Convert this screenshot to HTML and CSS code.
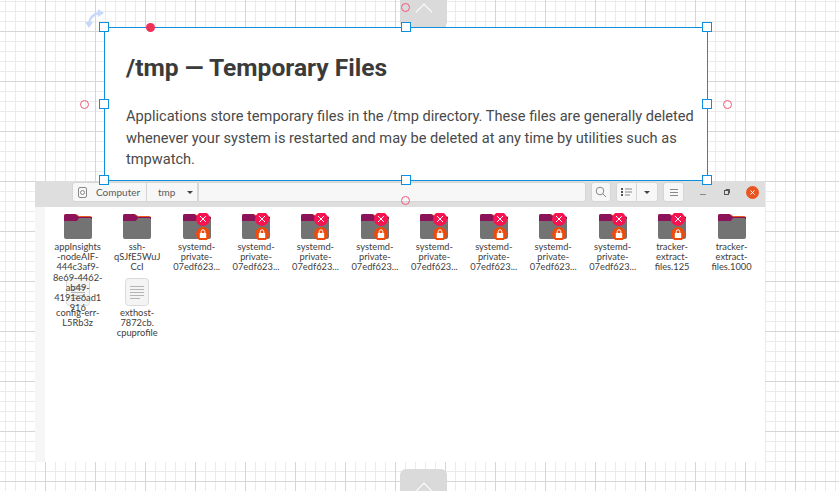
FILE: index.html
```html
<!DOCTYPE html>
<html lang="en">

<head>
    <meta charset="UTF-8">
    <meta name="viewport" content="width=device-width, initial-scale=1.0">
    <link rel="stylesheet" href="styles.css">
    <title>/tmp slide</title>
</head>

<body>
    <svg class="defs" width="0" height="0">
        <symbol id="folder" viewBox="0 0 30 27">
            <path d="M1 3 Q1 1 3 1 H13 L16 3 H27 Q29 3 29 5 V8 H1 Z" fill="#e4571f" />
            <path d="M1 3 Q1 1 3 1 H12 L16 4 H29 V6 H16 L14 8 H1 Z" fill="#8c1259" />
            <path d="M1 8 H14 L16 5 H27 Q29 5 29 7 V24 Q29 26 27 26 H3 Q1 26 1 24 Z" fill="#737373" />
        </symbol>
        <symbol id="locked" viewBox="0 0 30 27">
            <use href="#folder" />
            <circle cx="21" cy="6" r="7" fill="#f6134f" />
            <path d="M18 3 L24 9 M24 3 L18 9" stroke="#fff" stroke-width="1" />
            <circle cx="21" cy="21" r="7" fill="#ee4a0b" />
            <rect x="17.8" y="20" width="6.4" height="5" rx="0.6" fill="#fff" />
            <path d="M19.2 20 V18.6 A1.8 1.8 0 0 1 22.8 18.6 V20" fill="none" stroke="#fff" stroke-width="1" />
        </symbol>
        <symbol id="doc" viewBox="0 0 24 28">
            <rect x="0.5" y="0.5" width="23" height="27" rx="3" fill="#f4f4f4" stroke="#dadada" />
            <path d="M5 8.5 H19 M5 11.5 H19 M5 14.5 H19 M5 17.5 H19 M5 20.5 H15" stroke="#b4b4b4" stroke-width="1" />
        </symbol>
    </svg>

    <div class="tab tab-top"><span class="chevron"></span></div>
    <div class="tab tab-bottom"><span class="chevron"></span></div>

    <section class="window">
        <header class="toolbar">
            <div class="pathbar">
                <div class="crumb crumb-root">
                    <svg class="disk" width="9" height="11" viewBox="0 0 9 11">
                        <rect x="0.5" y="0.5" width="8" height="10" rx="1.5" fill="none" stroke="#888" />
                        <circle cx="4.5" cy="5.5" r="2" fill="none" stroke="#888" />
                    </svg>
                    <span>Computer</span>
                </div>
                <div class="crumb crumb-tmp">
                    <span>tmp</span>
                    <span class="caret"></span>
                </div>
            </div>
            <div class="path-fill"></div>
            <button class="tool tool-search">
                <svg width="12" height="12" viewBox="0 0 12 12">
                    <circle cx="5" cy="5" r="3.8" fill="none" stroke="#888" />
                    <path d="M8 8 L11 11" stroke="#888" />
                </svg>
            </button>
            <div class="tool-group">
                <button class="tool tool-list">
                    <svg width="11" height="8" viewBox="0 0 11 8">
                        <path d="M0 0 H2 V2 H0 Z M0 3 H2 V5 H0 Z M0 6 H2 V8 H0 Z" fill="#555" />
                        <path d="M4 1 H11 M4 4 H11 M4 7 H9" stroke="#888" />
                    </svg>
                </button>
                <button class="tool tool-drop"><span class="caret"></span></button>
            </div>
            <button class="tool tool-menu">
                <svg width="8" height="7" viewBox="0 0 8 7">
                    <path d="M0 0.5 H8 M0 3.5 H8 M0 6.5 H8" stroke="#888" />
                </svg>
            </button>
            <div class="controls">
                <span class="minimize"></span>
                <svg class="restore" width="6" height="6" viewBox="0 0 6 6">
                    <rect x="0.5" y="1.5" width="4" height="4" fill="none" stroke="#555" />
                    <path d="M2 1 V0.5 H5.5 V4 H5" fill="none" stroke="#555" />
                </svg>
                <span class="close">
                    <svg width="5" height="5" viewBox="0 0 5 5">
                        <path d="M0.5 0.5 L4.5 4.5 M4.5 0.5 L0.5 4.5" stroke="#fff" stroke-width="1" />
                    </svg>
                </span>
            </div>
        </header>

        <div class="files">
            <div class="file">
                <svg class="icon"><use href="#folder" /></svg>
                <p>appInsights<br>-nodeAIF-<br>444c3af9-<br>8e69-4462-<br>ab49-<br>4191e6ad1<br>916</p>
            </div>
            <div class="file">
                <svg class="icon"><use href="#folder" /></svg>
                <p>ssh-<br>qSJfE5WuJ<br>CcI</p>
            </div>
            <div class="file">
                <svg class="icon"><use href="#locked" /></svg>
                <p>systemd-<br>private-<br>07edf623...</p>
            </div>
            <div class="file">
                <svg class="icon"><use href="#locked" /></svg>
                <p>systemd-<br>private-<br>07edf623...</p>
            </div>
            <div class="file">
                <svg class="icon"><use href="#locked" /></svg>
                <p>systemd-<br>private-<br>07edf623...</p>
            </div>
            <div class="file">
                <svg class="icon"><use href="#locked" /></svg>
                <p>systemd-<br>private-<br>07edf623...</p>
            </div>
            <div class="file">
                <svg class="icon"><use href="#locked" /></svg>
                <p>systemd-<br>private-<br>07edf623...</p>
            </div>
            <div class="file">
                <svg class="icon"><use href="#locked" /></svg>
                <p>systemd-<br>private-<br>07edf623...</p>
            </div>
            <div class="file">
                <svg class="icon"><use href="#locked" /></svg>
                <p>systemd-<br>private-<br>07edf623...</p>
            </div>
            <div class="file">
                <svg class="icon"><use href="#locked" /></svg>
                <p>systemd-<br>private-<br>07edf623...</p>
            </div>
            <div class="file">
                <svg class="icon"><use href="#locked" /></svg>
                <p>tracker-<br>extract-<br>files.125</p>
            </div>
            <div class="file">
                <svg class="icon"><use href="#folder" /></svg>
                <p>tracker-<br>extract-<br>files.1000</p>
            </div>
            <div class="file">
                <svg class="icon icon-doc"><use href="#doc" /></svg>
                <p>config-err-<br>L5Rb3z</p>
            </div>
            <div class="file">
                <svg class="icon icon-doc"><use href="#doc" /></svg>
                <p>exthost-<br>7872cb.<br>cpuprofile</p>
            </div>
        </div>
    </section>

    <section class="textbox">
        <h1>/tmp — Temporary Files</h1>
        <p>Applications store temporary files in the /tmp directory. These files are generally deleted whenever your system is restarted and may be deleted at any time by utilities such as tmpwatch.</p>

        <span class="handle h-tl"></span>
        <span class="handle h-tc"></span>
        <span class="handle h-tr"></span>
        <span class="handle h-ml"></span>
        <span class="handle h-mr"></span>
        <span class="handle h-bl"></span>
        <span class="handle h-bc"></span>
        <span class="handle h-br"></span>

        <span class="link-dot"></span>
        <span class="anchor a-top"></span>
        <span class="anchor a-left"></span>
        <span class="anchor a-right"></span>
        <span class="anchor a-bottom"></span>

        <svg class="rotate" width="20" height="20" viewBox="0 0 20 20">
            <path d="M4 16 Q5 7 14 5" fill="none" stroke="#c6d9fa" stroke-width="2.4" />
            <path d="M13 1 L19 5 L13 9 Z" fill="#c6d9fa" />
            <path d="M0 14 L8 14 L4 20 Z" fill="#c6d9fa" />
        </svg>
    </section>
</body>

</html>
```
FILE: styles.css
```css
html,
body {
    height: 100%;
}

body {
    position: relative;
    margin: 0;
    overflow: hidden;
    background-color: #fff;
    background-image:
        linear-gradient(#d6d6d6 1px, transparent 1px),
        linear-gradient(90deg, #d6d6d6 1px, transparent 1px),
        linear-gradient(#ebebeb 1px, transparent 1px),
        linear-gradient(90deg, #ebebeb 1px, transparent 1px);
    background-size: 50px 50px, 50px 50px, 10px 10px, 10px 10px;
    background-position: 0 31px, 45px 0, 0 1px, 5px 0;
    font-family: Lato, sans-serif;
}

.defs {
    position: absolute;
}

/* grey page tabs at top and bottom of the canvas */
.tab {
    position: absolute;
    left: 400px;
    width: 47px;
    background: #dadada;
    display: flex;
    justify-content: center;
}

.tab-top {
    top: 0;
    height: 28px;
    border-radius: 0 0 6px 6px;
    padding-top: 6px;
    box-sizing: border-box;
}

.tab-bottom {
    top: 469px;
    height: 40px;
    border-radius: 6px 6px 0 0;
    padding-top: 16px;
    box-sizing: border-box;
}

.chevron {
    width: 11px;
    height: 11px;
    border-top: 1px solid #fff;
    border-left: 1px solid #fff;
    transform: rotate(45deg);
}

/* file manager window */
.window {
    position: absolute;
    left: 35px;
    top: 181px;
    width: 730px;
    height: 281px;
    display: flex;
    flex-direction: column;
    background: #fff;
    border-left: 10px solid #f6f6f6;
    box-sizing: border-box;
}

.toolbar {
    height: 26px;
    margin-left: -10px;
    padding: 1px 0 0 37px;
    background: #dedede;
    display: flex;
    align-items: flex-start;
    box-sizing: border-box;
    flex-shrink: 0;
}

.pathbar {
    display: flex;
    height: 20px;
    background: #f7f7f7;
    border: 1px solid #d6d6d6;
    border-radius: 3px 0 0 3px;
    box-sizing: border-box;
    font-size: 10px;
    color: #5a5a5a;
}

.crumb {
    display: flex;
    align-items: center;
    border-right: 1px solid #d6d6d6;
}

.crumb-root {
    width: 74px;
    padding-left: 5px;
    gap: 9px;
    box-sizing: border-box;
}

.crumb-tmp {
    width: 51px;
    padding-left: 11px;
    gap: 12px;
    box-sizing: border-box;
}

.disk {
    flex-shrink: 0;
}

.caret {
    width: 0;
    height: 0;
    border-left: 3px solid transparent;
    border-right: 3px solid transparent;
    border-top: 3px solid #444;
}

.path-fill {
    width: 387px;
    height: 20px;
    background: #f7f7f7;
    border: 1px solid #d6d6d6;
    border-left: 0;
    border-radius: 0 3px 3px 0;
    box-sizing: border-box;
}

.tool {
    height: 20px;
    padding: 0;
    border: 1px solid #d6d6d6;
    border-radius: 3px;
    background: #f7f7f7;
    display: flex;
    align-items: center;
    justify-content: center;
    box-sizing: border-box;
}

.tool-search {
    width: 20px;
    margin-left: 5px;
}

.tool-group {
    display: flex;
    margin-left: 5px;
}

.tool-list {
    width: 21px;
    border-radius: 3px 0 0 3px;
}

.tool-drop {
    width: 21px;
    border-left: 0;
    border-radius: 0 3px 3px 0;
}

.tool-menu {
    width: 21px;
    margin-left: 5px;
}

.controls {
    display: flex;
    align-items: center;
    height: 20px;
    margin-left: 16px;
}

.minimize {
    width: 6px;
    height: 1px;
    margin-top: 5px;
    background: #888;
}

.restore {
    margin-left: 18px;
}

.close {
    width: 13px;
    height: 13px;
    margin-left: 16px;
    border-radius: 50%;
    background: #e95420;
    display: flex;
    align-items: center;
    justify-content: center;
}

.files {
    display: grid;
    grid-template-columns: repeat(12, 59.45px);
    grid-auto-rows: 65px;
    padding: 6px 0 0 3px;
}

.file {
    display: flex;
    flex-direction: column;
    align-items: center;
    min-width: 0;
}

.file p {
    position: relative;
    z-index: 1;
    margin: 0;
    white-space: nowrap;
    text-align: center;
    font-size: 9.3px;
    line-height: 10.2px;
    color: #3d3d3d;
}

.icon {
    width: 30px;
    height: 27px;
    margin-bottom: 2px;
    flex-shrink: 0;
}

.icon-doc {
    width: 24px;
    height: 28px;
    margin-bottom: 2px;
}

/* selected text box */
.textbox {
    position: absolute;
    left: 104px;
    top: 27px;
    width: 604px;
    height: 154px;
    padding: 25px 10px 0 21px;
    background: #fff;
    border: 1px solid #0d8fdf;
    box-sizing: border-box;
    font-family: Roboto, sans-serif;
}

.textbox h1 {
    margin: 0 0 24px;
    font-size: 24.6px;
    line-height: 29px;
    font-weight: 700;
    color: #3b3b3b;
}

.textbox p {
    margin: 0;
    font-size: 14.6px;
    line-height: 21.6px;
    color: #4a4a4a;
}

.handle {
    position: absolute;
    width: 10px;
    height: 10px;
    background: #fff;
    border: 1px solid #0d8fdf;
    box-sizing: border-box;
}

.h-tl { left: -6px; top: -6px; }
.h-tc { left: 296px; top: -6px; }
.h-tr { left: 597px; top: -6px; }
.h-ml { left: -6px; top: 71px; }
.h-mr { left: 597px; top: 71px; }
.h-bl { left: -6px; top: 147px; }
.h-bc { left: 296px; top: 147px; }
.h-br { left: 597px; top: 147px; }

.link-dot {
    position: absolute;
    left: 41px;
    top: -5px;
    width: 9px;
    height: 9px;
    border-radius: 50%;
    background: #ee3158;
}

.anchor {
    position: absolute;
    width: 9px;
    height: 9px;
    border: 1px solid #ee5a78;
    border-radius: 50%;
    box-sizing: border-box;
}

.a-top { left: 296px; top: -25px; }
.a-left { left: -25px; top: 72px; }
.a-right { left: 618px; top: 72px; }
.a-bottom { left: 296px; top: 168px; }

.rotate {
    position: absolute;
    left: -20px;
    top: -20px;
}
```
